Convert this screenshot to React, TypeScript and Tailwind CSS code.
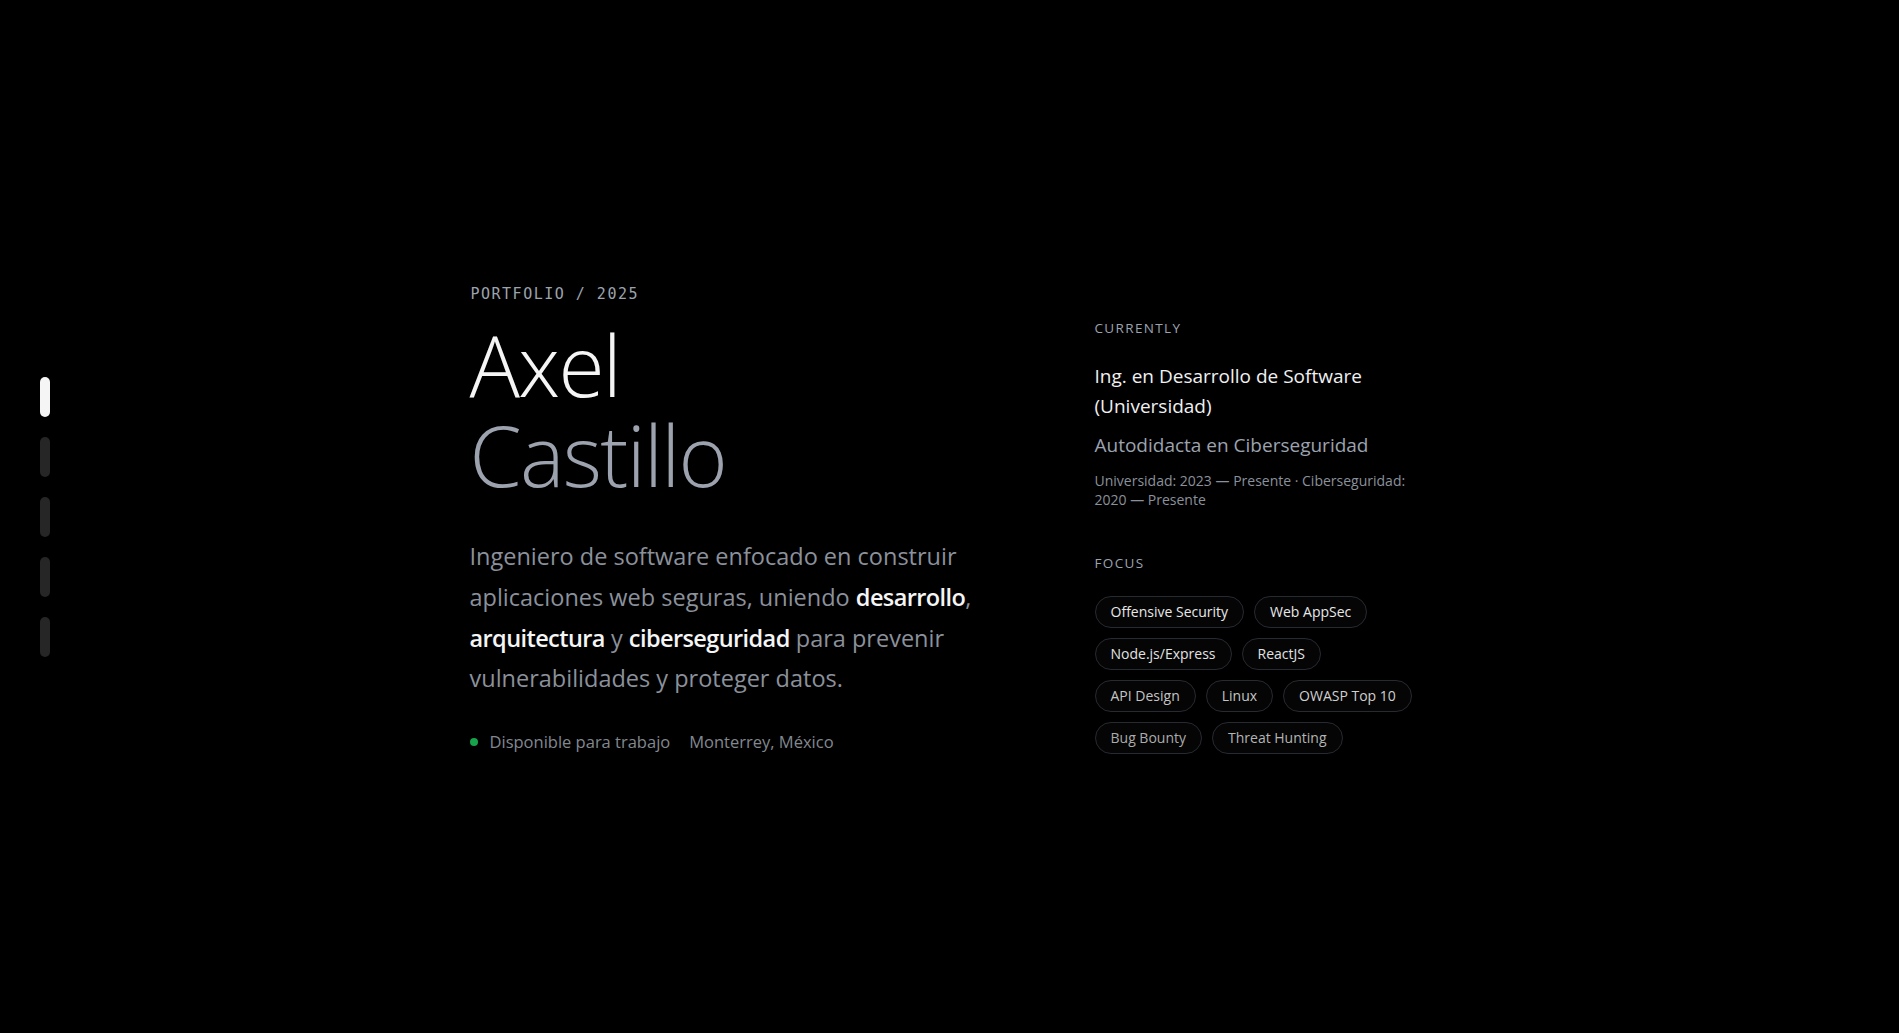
const sections = ['inicio', 'sobre-mi', 'proyectos', 'experiencia', 'contacto']

const focus: { label: string; tone: string }[] = [
    { label: 'Offensive Security', tone: 'text-[#e8e8e8]' },
    { label: 'Web AppSec', tone: 'text-[#e8e8e8]' },
    { label: 'Node.js/Express', tone: 'text-[#e2e2e2]' },
    { label: 'ReactJS', tone: 'text-[#e2e2e2]' },
    { label: 'API Design', tone: 'text-[#c4c4c4]' },
    { label: 'Linux', tone: 'text-[#c4c4c4]' },
    { label: 'OWASP Top 10', tone: 'text-[#d0d0d0]' },
    { label: 'Bug Bounty', tone: 'text-[#ababab]' },
    { label: 'Threat Hunting', tone: 'text-[#b4b4b4]' },
]

const SideNav = () => {
    return (
        <nav className="fixed left-10 top-1/2 -translate-y-1/2 flex flex-col gap-5">
            {sections.map((id, i) => (
                <a
                    key={id}
                    href={'#' + id}
                    aria-label={id}
                    className={
                        i === 0
                            ? 'block w-2.5 h-10 rounded-full bg-[#f5f5f5]'
                            : 'block w-2.5 h-10 rounded-full bg-[#262626]'
                    }
                />
            ))}
        </nav>
    )
}

export default function App() {
    return (
        <main className="min-h-screen bg-black flex items-center pt-[5px] font-['Open_Sans',sans-serif] antialiased">
            <SideNav />

            <div className="mx-auto w-full max-w-5xl px-8 grid grid-cols-[minmax(0,1fr)_335px] items-start">
                {/* Left column */}
                <div>
                    <p className="pl-px font-['DejaVu_Sans_Mono',monospace] text-[15px] leading-5 tracking-widest text-[#9ca3af]">
                        PORTFOLIO / 2025
                    </p>
                    <h1 className="mt-4 text-[84px] leading-[90px] font-light tracking-[-0.02em]">
                        <span className="block text-[#f5f5f5]">Axel</span>
                        <span className="block text-[#9ca3af]">Castillo</span>
                    </h1>
                    <p className="mt-9 max-w-xl text-[23.5px] leading-[40.75px] text-[#8b919b]">
                        Ingeniero de software enfocado en construir aplicaciones web seguras, uniendo{' '}
                        <span className="font-semibold tracking-tight text-[#f5f5f5]">desarrollo</span>,{' '}
                        <span className="font-semibold tracking-tight text-[#f5f5f5]">arquitectura</span> y{' '}
                        <span className="font-semibold tracking-tight text-[#f5f5f5]">ciberseguridad</span> para
                        prevenir vulnerabilidades y proteger datos.
                    </p>
                    <div className="mt-[31px] flex items-center gap-[19px] text-[16.5px] leading-6 text-[#82888f]">
                        <span className="flex items-center gap-3">
                            <span className="w-2 h-2 rounded-full bg-[#16a34a]" />
                            Disponible para trabajo
                        </span>
                        <span>Monterrey, México</span>
                    </div>
                </div>

                {/* Right column */}
                <aside className="mt-[34px]">
                    <h2 className="text-[13.5px] leading-5 uppercase tracking-widest text-[#9ca3af]">Currently</h2>
                    <p className="mt-[23px] text-[19px] leading-[30px] text-[#f0f0f0]">
                        Ing. en Desarrollo de Software (Universidad)
                    </p>
                    <p className="mt-[10px] text-[19px] leading-7 text-[#9ca3af]">Autodidacta en Ciberseguridad</p>
                    <p className="mt-3 text-[14px] leading-[19px] text-[#8b919b]">
                        Universidad: 2023 — Presente · Ciberseguridad: 2020 — Presente
                    </p>

                    <h2 className="mt-[44px] text-[13.5px] leading-5 uppercase tracking-widest text-[#9ca3af]">Focus</h2>
                    <ul className="mt-[23px] flex flex-wrap gap-2.5">
                        {focus.map((item) => (
                            <li
                                key={item.label}
                                className={
                                    'rounded-full border border-[#262a31] bg-[#050505] px-[15px] py-1 text-[14px] leading-[22px] ' +
                                    item.tone
                                }>
                                {item.label}
                            </li>
                        ))}
                    </ul>
                </aside>
            </div>
        </main>
    )
}
